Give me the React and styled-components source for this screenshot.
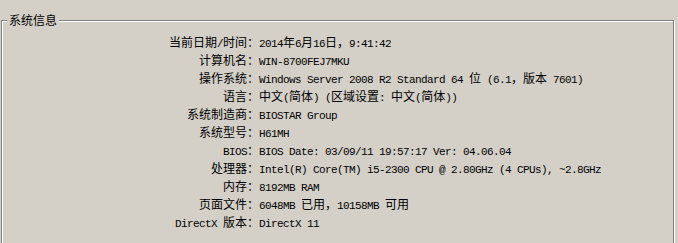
import React from 'react';
import styled, { createGlobalStyle } from 'styled-components';

const GlobalStyle = createGlobalStyle`
  html, body {
    margin: 0;
    padding: 0;
    overflow: hidden;
    background: #d4d0c8;
  }
  body {
    font-family: "Noto Sans CJK SC", sans-serif;
    font-size: 12px;
    color: #000;
  }
`;

const Page = styled.div`
  width: 678px;
  height: 243px;
  overflow: hidden;
  padding-top: 20px;
  box-sizing: border-box;
  background: #d4d0c8;
`;

// etched group box: dark line with a white highlight beside it
const GroupBox = styled.div`
  position: relative;
  box-sizing: border-box;
  margin-left: 1px;
  width: 673px;
  height: 240px;
  border: 1px solid #808080;
  box-shadow: inset 1px 1px 0 #fff, 1px 1px 0 #fff;
  padding-top: 12px;
`;

const Legend = styled.div`
  position: absolute;
  top: -8px;
  left: 5px;
  padding: 0 2px;
  line-height: 14px;
  background: #d4d0c8;
  font-family: "Noto Sans CJK SC", sans-serif;
  font-size: 12px;
`;

const InfoGrid = styled.div`
  display: grid;
  grid-template-columns: 257px 1fr;
  grid-auto-rows: 18px;
  line-height: 18px;
`;

const Label = styled.div`
  text-align: right;
  white-space: pre;
`;

const Value = styled.div`
  white-space: pre;
`;

const Latin = styled.span`
  font-family: "Liberation Mono", monospace;
  font-size: 11px;
  letter-spacing: -0.6px;
`;

const Cjk = styled.span`
  font-family: "Noto Sans CJK SC", sans-serif;
  font-size: 12px;
`;

const CJK_RE = /([\u2E80-\u9FFF\uFF00-\uFFEF]+)/;

const Mixed = ({ text }) =>
  text
    .split(CJK_RE)
    .filter(Boolean)
    .map((part, i) =>
      CJK_RE.test(part) ? <Cjk key={i}>{part}</Cjk> : <Latin key={i}>{part}</Latin>,
    );

const rows = [
  ['当前日期/时间', '2014年6月16日，9:41:42'],
  ['计算机名', 'WIN-8700FEJ7MKU'],
  ['操作系统', 'Windows Server 2008 R2 Standard 64 位 (6.1，版本 7601)'],
  ['语言', '中文(简体) (区域设置: 中文(简体))'],
  ['系统制造商', 'BIOSTAR Group'],
  ['系统型号', 'H61MH'],
  ['BIOS', 'BIOS Date: 03/09/11 19:57:17 Ver: 04.06.04'],
  ['处理器', 'Intel(R) Core(TM) i5-2300 CPU @ 2.80GHz (4 CPUs), ~2.8GHz'],
  ['内存', '8192MB RAM'],
  ['页面文件', '6048MB 已用，10158MB 可用'],
  ['DirectX 版本', 'DirectX 11'],
];

export default function App() {
  return (
    <>
      <GlobalStyle />
      <Page>
        <GroupBox>
          <Legend>系统信息</Legend>
          <InfoGrid>
            {rows.map(([label, value]) => (
              <React.Fragment key={label}>
                <Label>
                  <Mixed text={label + '：'} />
                </Label>
                <Value>
                  <Mixed text={value} />
                </Value>
              </React.Fragment>
            ))}
          </InfoGrid>
        </GroupBox>
      </Page>
    </>
  );
}
